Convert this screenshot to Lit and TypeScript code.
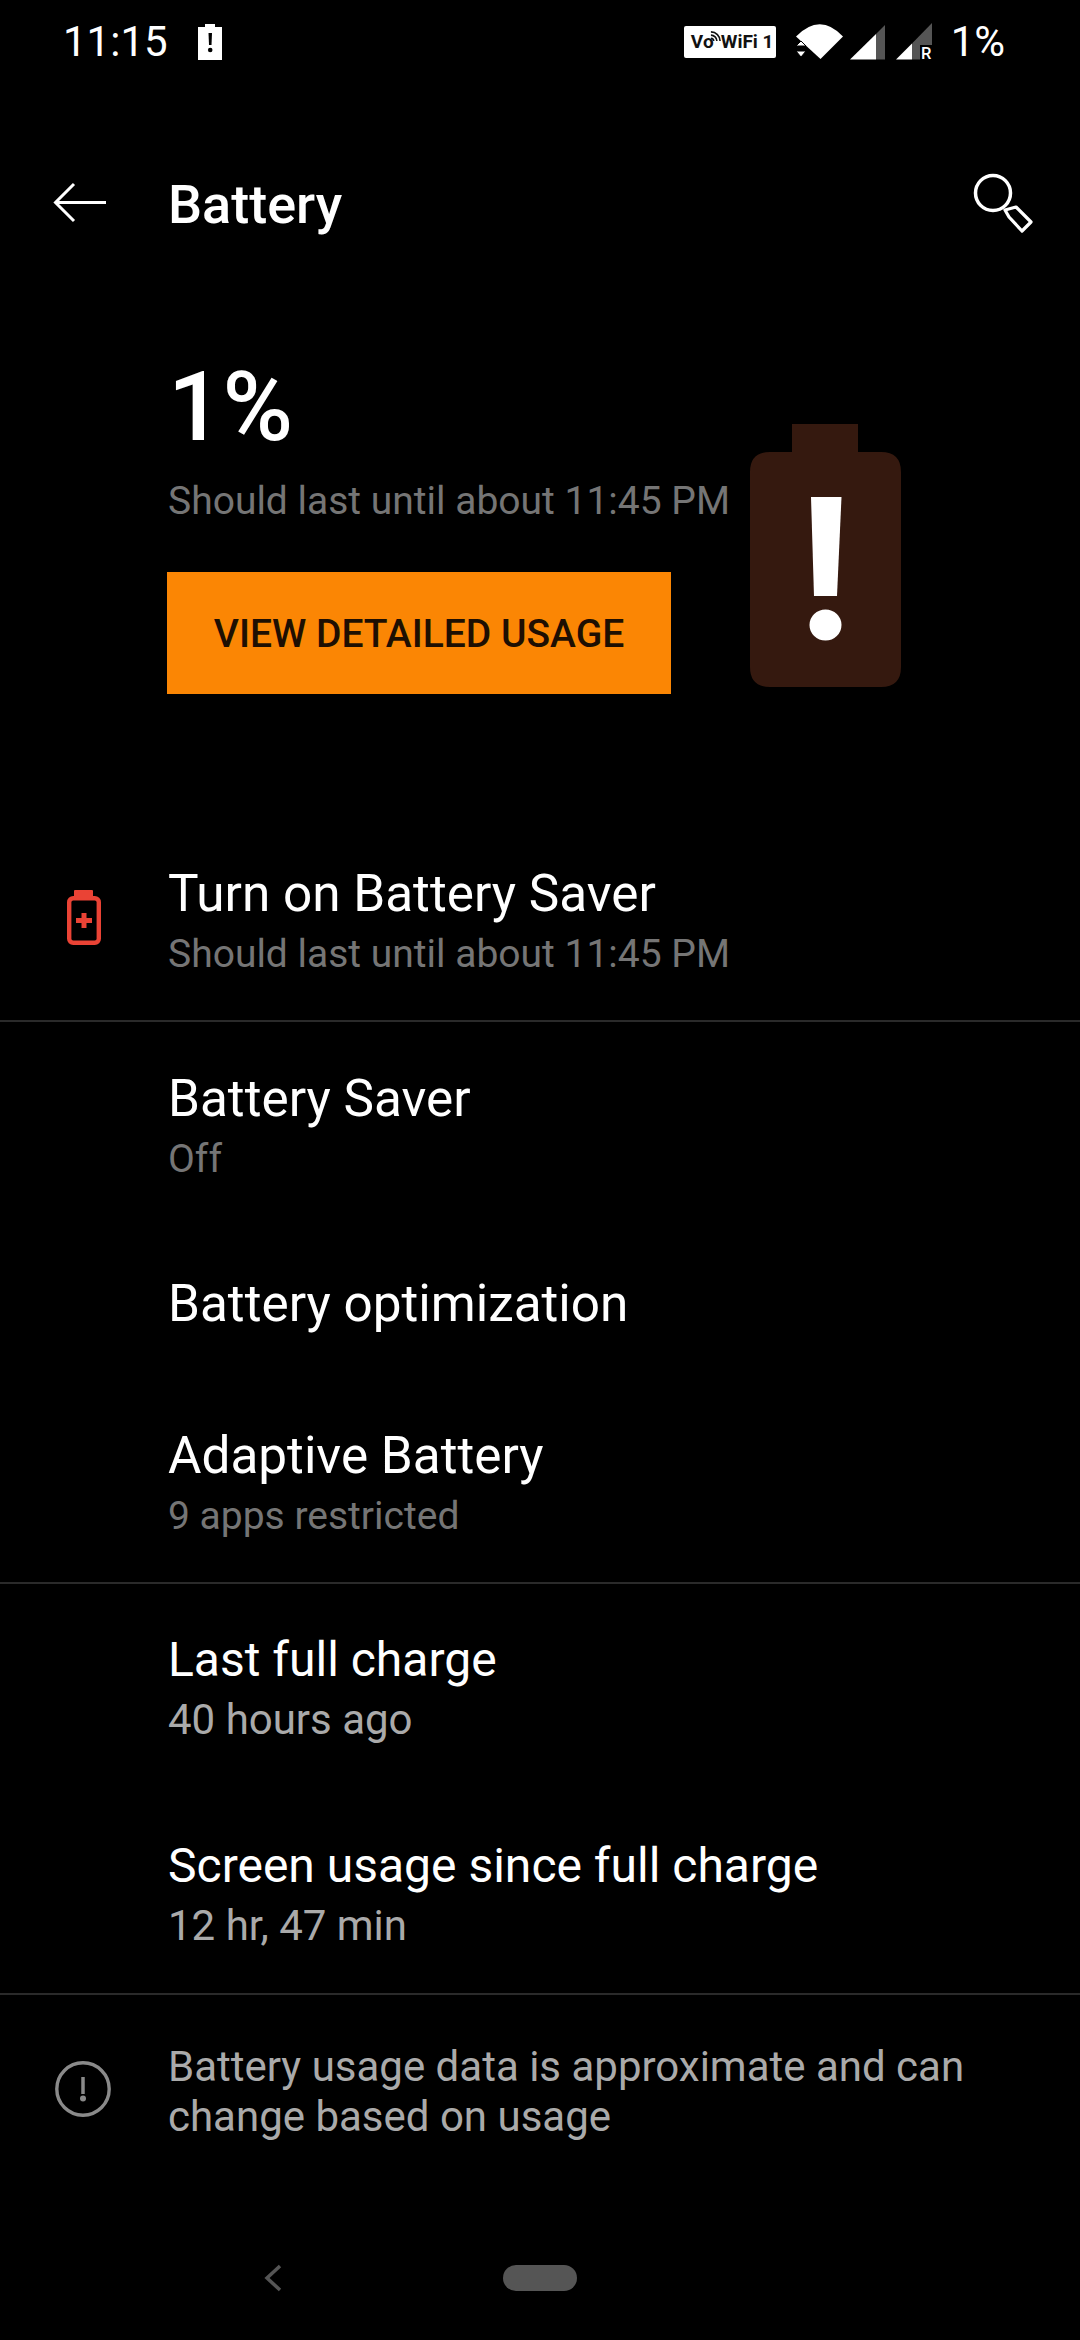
import { LitElement, html, css, nothing } from "lit";
import { customElement } from "lit/decorators.js";

interface Row { title: string; sub?: string; light?: boolean; icon?: boolean }

@customElement("app-root")
export class AppRoot extends LitElement {
  static styles = css`
    :host {
      display: flex; flex-direction: column; width: 1080px; height: 2340px;
      background: #000; color: #fff; overflow: hidden;
      font-family: Roboto, "Liberation Sans", sans-serif;
    }
    svg { display: block; flex: none; }
    .status { display: flex; align-items: center; height: 83px; padding: 0 75px 0 63px; flex: none; font-size: 42px; letter-spacing: 0; }
    .status .bat { margin-left: 30px; }
    .spacer { flex: 1; }
    .badge {
      display: flex; align-items: center; height: 32px; width: 92px; box-sizing: border-box; padding-left: 7px;
      background: #fff; color: #111; border-radius: 2px; font-size: 19px; font-weight: 700; letter-spacing: 0; white-space: nowrap;
    }
    .arcs { margin: -10px 0 0 -4px; }
    .wifi { margin-left: 20px; }
    .sig1 { margin-left: 7px; }
    .sig2 { margin-left: 11px; }
    .pct { margin-left: 19px; }
    .toolbar { display: flex; align-items: center; height: 240px; flex: none; }
    .toolbar .back { margin-left: 50px; }
    .toolbar .title { margin-left: 58px; padding-top: 2px; font-size: 54px; font-weight: 500; flex: 1; }
    .toolbar .search { margin-right: 46px; }
    .hero { display: flex; flex: none; height: 494px; }
    .hero-left { width: 750px; box-sizing: border-box; padding: 28px 0 0 168px; flex: none; }
    .big { font-size: 96px; line-height: 112px; font-weight: 500; }
    .hero-sub { margin-top: 8px; font-size: 39px; line-height: 60px; color: #757575; white-space: nowrap; }
    .btn {
      margin-top: 41px; margin-left: -1px; width: 504px; height: 122px; box-sizing: border-box; padding-top: 2px;
      display: flex; align-items: center; justify-content: center;
      background: #fb8604; color: #1e0f02; font-size: 39px; font-weight: 500; white-space: nowrap;
    }
    .hero-bat { margin-top: 101px; }
    .section { border-bottom: 2px solid #2a2a2a; flex: none; }
    .row { display: flex; height: 206px; box-sizing: border-box; padding-top: 47px; }
    .row.plain { padding-top: 46px; }
    .row.single { height: 151px; padding-top: 46px; }
    .section .row:last-child { height: 203px; }
    .ic { width: 168px; flex: none; display: flex; justify-content: center; padding: 26px 0 0 0; box-sizing: border-box; }
    .t { font-size: 51.3px; line-height: 60px; white-space: nowrap; }
    .s { font-size: 39px; line-height: 60px; color: #757575; white-space: nowrap; }
    .row.plain .t { font-size: 48px; }
    .s.light { font-size: 42px; color: #aaa; }
    .foot { display: flex; padding-top: 47px; flex: none; }
    .foot .ic { padding-top: 19px; }
    .foot .ic svg { margin-right: 2px; }
    .foot-text { font-size: 42px; line-height: 50px; color: #aaa; width: 850px; }
    .nav { margin-top: auto; height: 124px; display: flex; align-items: center; flex: none; }
    .nav .chev { margin-left: 264px; }
    .pill { margin-left: 221px; width: 74px; height: 26px; border-radius: 13px; background: #555; }
  `;

  private rows1: Row[] = [{ title: "Turn on Battery Saver", sub: "Should last until about 11:45 PM", icon: true }];
  private rows2: Row[] = [
    { title: "Battery Saver", sub: "Off" },
    { title: "Battery optimization" },
    { title: "Adaptive Battery", sub: "9 apps restricted" },
  ];
  private rows3: Row[] = [
    { title: "Last full charge", sub: "40 hours ago", light: true },
    { title: "Screen usage since full charge", sub: "12 hr, 47 min", light: true },
  ];

  private row(r: Row) {
    return html`<div class="row ${r.sub ? "" : "single"} ${r.light ? "plain" : ""}">
      <div class="ic">
        ${r.icon
          ? html`<svg width="40" height="58" viewBox="0 0 40 58">
              <rect x="10" y="0" width="19" height="8" rx="1" fill="#ea4335"/>
              <rect x="5.200" y="8.200" width="29.600" height="44.600" rx="4" fill="none" stroke="#ea4335" stroke-width="4.400"/>
              <path d="M20 23V38M12 30.500H28" stroke="#ea4335" stroke-width="5" fill="none"/>
            </svg>`
          : nothing}
      </div>
      <div>
        <div class="t">${r.title}</div>
        ${r.sub ? html`<div class="s ${r.light ? "light" : ""}">${r.sub}</div>` : nothing}
      </div>
    </div>`;
  }

  render() {
    return html`
      <div class="status">
        <span>11:15</span>
        <svg class="bat" width="24" height="36" viewBox="0 0 24 36">
          <path d="M7 0H17V3H24V36H0V3H7Z" fill="#fff"/>
          <path d="M10.500 9H14L13.500 21H11Z" fill="#000"/>
          <circle cx="12.200" cy="26" r="2.300" fill="#000"/>
        </svg>
        <div class="spacer"></div>
        <div class="badge">
          <span>V</span><span>o</span>
          <svg class="arcs" width="11" height="11" viewBox="0 0 12 12">
            <path d="M1 8A3 3 0 0 1 4 11M1 4.500A6.500 6.500 0 0 1 7.500 11M1 1A10 10 0 0 1 11 11" fill="none" stroke="#111" stroke-width="1.800"/>
          </svg>
          <span>WiFi 1</span>
        </div>
        <svg class="wifi" width="47" height="36" viewBox="0 0 47 36">
          <path d="M0 12.500Q24 -12 47 12.500L24.500 35Z" fill="#fff"/>
          <path d="M0 22L5 17 10 22ZM0 27H10L5 33Z" fill="#fff" stroke="#000" stroke-width="1"/>
        </svg>
        <svg class="sig1" width="35" height="36" viewBox="0 0 35 36">
          <path d="M0 35.500L26 10V35.500Z" fill="#fff"/>
          <path d="M26 10L35 1V35.500H26Z" fill="#555"/>
        </svg>
        <svg class="sig2" width="36" height="37" viewBox="0 0 36 37">
          <path d="M0 36.500L16 20.500V36.500Z" fill="#fff"/>
          <path d="M16 20.500L36 0V36.500H16Z" fill="#555"/>
          <rect x="24" y="22" width="12" height="15" fill="#000"/>
          <text x="25" y="36" font-family="Roboto" font-size="16.500" font-weight="500" fill="#fff">R</text>
        </svg>
        <span class="pct">1%</span>
      </div>

      <div class="toolbar">
        <svg class="back" width="60" height="44" viewBox="0 0 60 44">
          <path d="M56 21.500H6M24 3L5.500 21.500 24 40" fill="none" stroke="#fff" stroke-width="3"/>
        </svg>
        <div class="title">Battery</div>
        <svg class="search" width="62" height="62" viewBox="0 0 62 62">
          <circle cx="21" cy="21" r="17.500" fill="none" stroke="#fff" stroke-width="3.500"/>
          <path d="M33 38L44 35 59 50 50 59 37 45Z" fill="none" stroke="#fff" stroke-width="3.200" stroke-linejoin="round"/>
        </svg>
      </div>

      <div class="hero">
        <div class="hero-left">
          <div class="big">1%</div>
          <div class="hero-sub">Should last until about 11:45 PM</div>
          <div class="btn">VIEW DETAILED USAGE</div>
        </div>
        <svg class="hero-bat" width="151" height="263" viewBox="0 0 151 263">
          <path d="M42 0H108V28H131Q151 28 151 48V243Q151 263 131 263H20Q0 263 0 243V48Q0 28 20 28H42Z" fill="#35190f"/>
          <path d="M61 73H91.500L87 172H64Z" fill="#fff"/>
          <ellipse cx="75.500" cy="201" rx="16" ry="15.500" fill="#fff"/>
        </svg>
      </div>

      <div class="section">${this.rows1.map((r) => this.row(r))}</div>
      <div class="section">${this.rows2.map((r) => this.row(r))}</div>
      <div class="section">${this.rows3.map((r) => this.row(r))}</div>

      <div class="foot">
        <div class="ic">
          <svg width="56" height="56" viewBox="0 0 56 56">
            <circle cx="28" cy="28" r="26.200" fill="none" stroke="#8a8a8a" stroke-width="3.400"/>
            <path d="M28 16V33" stroke="#8a8a8a" stroke-width="3.500"/>
            <circle cx="28" cy="37.500" r="3" fill="#8a8a8a"/>
          </svg>
        </div>
        <div class="foot-text">Battery usage data is approximate and can change based on usage</div>
      </div>

      <div class="nav">
        <svg class="chev" width="18" height="28" viewBox="0 0 18 28">
          <path d="M16 2L3 14 16 26" fill="none" stroke="#555" stroke-width="3.500"/>
        </svg>
        <div class="pill"></div>
      </div>
    `;
  }
}
